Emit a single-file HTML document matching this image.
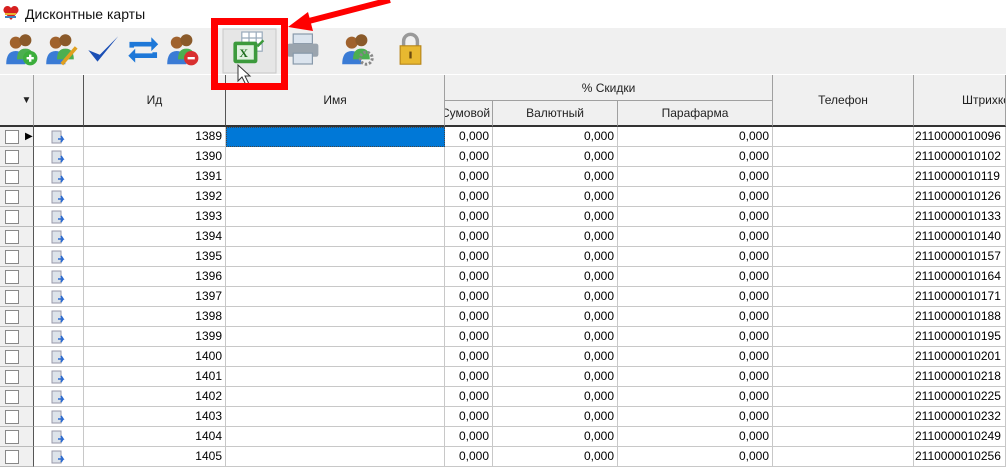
<!DOCTYPE html>
<html><head><meta charset="utf-8"><style>
*{margin:0;padding:0;box-sizing:border-box}
body{width:1006px;height:454px;overflow:hidden;background:#fff;font-family:"Liberation Sans",Arial,sans-serif;font-size:12px;position:relative;color:#000}
.a{position:absolute}
.tb{left:0;top:28px;width:1006px;height:46px;background:#f0f0f0}
.hd{background:#f0f0f0;border-right:1px solid #a0a0a0;border-bottom:1px solid #a0a0a0;display:flex;align-items:center;justify-content:center;font-size:12px;color:#222}
.row{left:0;height:20px;width:1006px}
.c{position:absolute;top:0;height:20px;border-right:1px solid #c8c8c8;border-bottom:1px solid #c8c8c8;font-size:12px;line-height:19px;text-align:right;padding-right:3px;white-space:nowrap;overflow:hidden}
</style></head><body>
<div class="a" style="left:2px;top:4px;width:18px;height:18px">
<svg width="18" height="18" viewBox="0 0 18 18"><path d="M9 16 L2 8 A4 4 0 0 1 9 4 A4 4 0 0 1 16 8 Z" fill="#d62020"/><rect x="3" y="9" width="11" height="2" fill="#e8b030"/><rect x="3" y="12" width="11" height="2" fill="#4080c0"/></svg></div>
<div class="a" style="left:25px;top:6px;font-size:14px;color:#111">Дисконтные карты</div>
<div class="a tb"></div>
<div class="a" style="left:0;top:75px;width:1006px;height:52px;background:#f0f0f0;border-top:1px solid #a0a0a0"></div>
<div class="a hd" style="left:0;top:75px;width:34px;height:52px;border-bottom:2px solid #333"><span style="font-size:10px;margin-left:20px">▼</span></div>
<div class="a hd" style="left:34px;top:75px;width:50px;height:52px;border-bottom:2px solid #333;border-right:1px solid #555"></div>
<div class="a hd" style="left:84px;top:75px;width:142px;height:52px;border-bottom:2px solid #333;border-right:1px solid #555">Ид</div>
<div class="a hd" style="left:226px;top:75px;width:219px;height:52px;border-bottom:2px solid #333">Имя</div>
<div class="a hd" style="left:445px;top:75px;width:328px;height:26px">% Скидки</div>
<div class="a hd" style="left:445px;top:101px;width:48px;height:26px;border-bottom:2px solid #333;justify-content:flex-start;overflow:hidden"><span style="margin-left:-4px">Сумовой</span></div>
<div class="a hd" style="left:493px;top:101px;width:125px;height:26px;border-bottom:2px solid #333">Валютный</div>
<div class="a hd" style="left:618px;top:101px;width:155px;height:26px;border-bottom:2px solid #333">Парафарма</div>
<div class="a hd" style="left:773px;top:75px;width:141px;height:52px;border-bottom:2px solid #333">Телефон</div>
<div class="a hd" style="left:914px;top:75px;width:92px;height:52px;border-bottom:2px solid #333;justify-content:flex-start;padding-left:48px;overflow:hidden">Штрихкод</div>
<div id="rows"></div>
<script>
var h='';var bc=[96,102,119,126,133,140,157,164,171,188,195,201,218,225,232,249,256];
for(var i=0;i<17;i++){var y=127+i*20;var id=1389+i;
h+='<div class="a row" style="top:'+y+'px">'+
'<div class="c" style="left:0;width:34px;background:#f0f0f0;border-right:1px solid #555;border-bottom:1px solid #bbb"><div style="position:absolute;left:5px;top:3px;width:14px;height:14px;border:1px solid #888;background:#fff"></div>'+(i==0?'<div style="position:absolute;left:25px;top:0;font-size:10px">▶</div>':'')+'</div>'+
'<div class="c" style="left:34px;width:50px"><svg style="position:absolute;left:17px;top:3px" width="14" height="14"><rect x="1" y="1" width="9" height="12" fill="#dde3ea" stroke="#99a"/><path d="M7 9 L12 9 L10 6 M12 9 L10 12" stroke="#2a6ad0" stroke-width="1.6" fill="none"/></svg></div>'+
'<div class="c" style="left:84px;width:142px">'+id+'</div>'+
'<div class="c" style="left:226px;width:219px;'+(i==0?'background:#0078d7;border:1px dotted #444':'')+'"></div>'+
'<div class="c" style="left:445px;width:48px">0,000</div>'+
'<div class="c" style="left:493px;width:125px">0,000</div>'+
'<div class="c" style="left:618px;width:155px">0,000</div>'+
'<div class="c" style="left:773px;width:141px"></div>'+
'<div class="c" style="left:914px;width:92px;text-align:left;padding-left:1px">2110000010'+String(bc[i]).padStart(3,'0')+'</div></div>';}
document.getElementById('rows').innerHTML=h;
</script>
<svg class="a" style="left:0;top:28px" width="460" height="60" viewBox="0 0 460 60">
<g transform="translate(5,5) scale(1.2)"><circle cx="9" cy="8" r="5" fill="#a0622d"/><path d="M1 26 Q1 15 9 15 Q17 15 17 26Z" fill="#3a7bd5"/><circle cx="17" cy="6" r="5" fill="#8a5a2a"/><path d="M10 22 Q10 13 17 13 Q24 13 24 22Z" fill="#4caf50"/><circle cx="21" cy="21" r="6" fill="#3cae3c"/><path d="M18 21h6M21 18v6" stroke="#fff" stroke-width="2"/></g>
<g transform="translate(45,5) scale(1.2)"><circle cx="9" cy="8" r="5" fill="#a0622d"/><path d="M1 26 Q1 15 9 15 Q17 15 17 26Z" fill="#3a7bd5"/><circle cx="17" cy="6" r="5" fill="#8a5a2a"/><path d="M10 22 Q10 13 17 13 Q24 13 24 22Z" fill="#4caf50"/><path d="M14 26 L26 12" stroke="#e0a020" stroke-width="3"/></g>
<g transform="translate(86,6) scale(1.15)"><path d="M2 14 L10 24 L28 2 L12 18 Z" fill="#1b4fb5"/></g>
<g transform="translate(126,7) scale(1.15)"><path d="M3 11 V6 H22 V2 L28 8 L22 14 V10 H7 V11Z" fill="#1e78d8"/><path d="M27 15 V20 H8 V24 L2 18 L8 12 V16 H23 V15Z" fill="#1e78d8"/></g>
<g transform="translate(166,5) scale(1.2)"><circle cx="9" cy="8" r="5" fill="#a0622d"/><path d="M1 26 Q1 15 9 15 Q17 15 17 26Z" fill="#3a7bd5"/><circle cx="17" cy="6" r="5" fill="#8a5a2a"/><path d="M10 22 Q10 13 17 13 Q24 13 24 22Z" fill="#4caf50"/><circle cx="21" cy="21" r="6" fill="#d83030"/><path d="M18 21h6" stroke="#fff" stroke-width="2"/></g>
<rect x="223" y="1" width="53" height="44" fill="#e6e6e6" stroke="#c8c8c8"/>
<g transform="translate(231,4) scale(1.2)"><rect x="9" y="0" width="17" height="16" fill="#fff" stroke="#9ab"/><path d="M9 5h17M9 10h17M15 0v16M21 0v16" stroke="#9ab"/><rect x="2" y="8" width="20" height="18" rx="2" fill="#3c9a3c"/><rect x="5" y="11" width="14" height="12" fill="#dff0df"/><text x="7" y="21" font-size="10" font-weight="bold" fill="#1e6e1e" font-family="Liberation Serif">X</text><path d="M22 12 L27 7" stroke="#3c9a3c" stroke-width="2"/></g>
<path d="M238 37 L238 53 L242 49 L246 57 L249 56 L245 48 L250 48 Z" fill="#fff" stroke="#333"/>
<g transform="translate(286,6) scale(1.2)"><rect x="6" y="0" width="16" height="8" fill="#dbe4ee" stroke="#8899aa"/><rect x="1" y="8" width="26" height="11" rx="2" fill="#9aa4ae"/><rect x="6" y="16" width="16" height="9" fill="#dbe4ee" stroke="#8899aa"/></g>
<g transform="translate(341,5) scale(1.2)"><circle cx="9" cy="8" r="5" fill="#a0622d"/><path d="M1 26 Q1 15 9 15 Q17 15 17 26Z" fill="#3a7bd5"/><circle cx="17" cy="6" r="5" fill="#8a5a2a"/><path d="M10 22 Q10 13 17 13 Q24 13 24 22Z" fill="#4caf50"/><circle cx="21" cy="21" r="5" fill="none" stroke="#888" stroke-width="2.5" stroke-dasharray="2 1.5"/></g>
<g transform="translate(399,4) scale(1.15)"><path d="M4 12 V8 A6 6 0 0 1 16 8 V12" fill="none" stroke="#999" stroke-width="3"/><rect x="1" y="12" width="18" height="16" fill="#e8b830" stroke="#b8861a"/><rect x="9" y="17" width="2" height="6" fill="#6a4a10"/></g>
</svg>
<div class="a" style="left:211px;top:18px;width:77px;height:72px;border:7px solid #f00"></div>
<svg class="a" style="left:0;top:0" width="1006" height="100"><line x1="390" y1="0" x2="305" y2="22" stroke="#f00" stroke-width="6"/><path d="M288 27 L308 12 L313 31 Z" fill="#f00"/></svg>
</body></html>
